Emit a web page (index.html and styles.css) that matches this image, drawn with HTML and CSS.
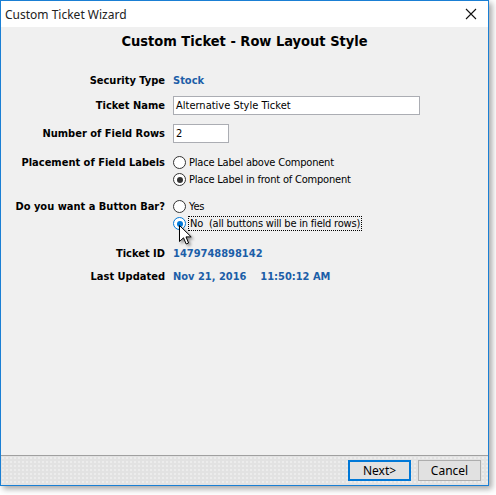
FILE: index.html
```html
<!DOCTYPE html>
<html>
<head>
<meta charset="utf-8">
<link rel="stylesheet" href="styles.css">
</head>
<body>
<div class="window">
  <div class="titlebar">
    <span class="title">Custom Ticket Wizard</span>
    <svg class="close" width="12" height="12" viewBox="0 0 12 12"><path d="M1 1 L11 11 M11 1 L1 11" stroke="#111" stroke-width="1.1" fill="none"/></svg>
  </div>
  <div class="content">
    <div class="heading">Custom Ticket - Row Layout Style</div>
    <div class="row r1"><div class="label">Security Type</div><div class="value">Stock</div></div>
    <div class="row r2"><div class="label">Ticket Name</div><div class="input wide">Alternative Style Ticket</div></div>
    <div class="row r3"><div class="label">Number of Field Rows</div><div class="input narrow">2</div></div>
    <div class="row r4"><div class="label lab-top">Placement of Field Labels</div>
      <div class="radios">
        <div class="radio"><span class="circle"></span><span class="rtext">Place Label above Component</span></div>
        <div class="radio rb"><span class="circle on"></span><span class="rtext">Place Label in front of Component</span></div>
      </div>
    </div>
    <div class="row r5"><div class="label lab-top">Do you want a Button Bar?</div>
      <div class="radios">
        <div class="radio"><span class="circle"></span><span class="rtext">Yes</span></div>
        <div class="radio"><span class="circle on hover"></span><span class="rtext focus">No&nbsp; (all buttons will be in field rows)</span></div>
      </div>
    </div>
    <div class="row r6"><div class="label">Ticket ID</div><div class="value">1479748898142</div></div>
    <div class="row r7"><div class="label">Last Updated</div><div class="value">Nov 21, 2016&nbsp;&nbsp;&nbsp;&nbsp;11:50:12 AM</div></div>
  </div>
  <div class="footer">
    <div class="btn primary">Next&gt;</div>
    <div class="btn">Cancel</div>
  </div>
  <svg class="cursor" width="14" height="22" viewBox="0 0 14 22"><path d="M0.5 0.5 L0.5 16.5 L4.5 12.8 L7.2 19 L9.6 18 L7 11.9 L12.2 11.9 Z" fill="#fff" stroke="#000" stroke-width="1" stroke-linejoin="miter"/></svg>
</div>
</body>
</html>
```
FILE: styles.css
```css
html, body { margin: 0; padding: 0; background: #fff; }
body { width: 496px; height: 495px; position: relative; font-family: "DejaVu Sans Condensed", "DejaVu Sans", sans-serif; font-size: 11px; color: #000; }
.window {
  position: relative;
  width: 487px; height: 484px;
  border: 1px solid #1a7fd4;
  background: #f0f0f0;
  display: flex; flex-direction: column;
  box-shadow: 3px 3px 6px rgba(0,0,0,0.35);
}
.titlebar {
  height: 26px; background: #fff;
  display: flex; align-items: center; justify-content: space-between;
  padding: 0 11px 0 4px;
}
.title { font-family: "Noto Sans", sans-serif; font-size: 12px; color: #222; }
.content { flex: 1; display: flex; flex-direction: column; }
.heading { height: 28px; display: flex; align-items: center; justify-content: center; font-weight: bold; font-size: 14.5px; }
.row { display: flex; align-items: center; white-space: nowrap; }
.label { width: 164px; text-align: right; font-weight: bold; flex: none; margin-right: 8px; }
.lab-top { align-self: flex-start; line-height: 17px; }
.value { color: #1c5ea8; font-weight: bold; }
.r1 { margin-top: 15px; height: 20px; }
.r2 { margin-top: 6px; height: 19px; }
.r3 { margin-top: 9px; height: 19px; }
.r4 { margin-top: 11px; align-items: flex-start; }
.r5 { margin-top: 10px; align-items: flex-start; }
.r6 { margin-top: 11px; height: 20px; }
.r7 { margin-top: 3px; height: 20px; }
.input { height: 17px; border: 1px solid #abadb3; background: #fff; box-sizing: content-box; line-height: 17px; padding-left: 2px; }
.wide { width: 243px; }
.narrow { width: 52px; }
.radios { display: flex; flex-direction: column; }
.radio { height: 17px; display: flex; align-items: center; }
.rtext { letter-spacing: -0.2px; }
.circle { width: 11px; height: 11px; border: 1px solid #333; border-radius: 50%; background: #fff; position: relative; margin-right: 3px; flex: none; }
.circle.on::after { content: ""; position: absolute; left: 2.5px; top: 2.5px; width: 6px; height: 6px; border-radius: 50%; background: #333; }
.circle.hover { border-color: #0078d7; }
.circle.hover::after { background: #0078d7; }
.focus { outline: 1px dotted #000; outline-offset: 0; padding: 0 1px; line-height: 13px; }
.footer {
  height: 29px; border-top: 1px solid #a0a0a0;
  background-color: #e2e2e2;
  background-image: radial-gradient(circle, #ececec 0.8px, transparent 1.2px);
  background-size: 4px 4px;
  display: flex; justify-content: flex-end; align-items: center; gap: 7px;
  padding-right: 7px;
}
.btn { width: 61px; height: 19px; border: 1px solid #adadad; background: #e1e1e1; display: flex; align-items: center; justify-content: center; font-family: "Noto Sans", sans-serif; font-size: 12px; color: #000; box-sizing: content-box; }
.btn.primary { border-color: #0078d7; box-shadow: inset 0 0 0 1px #0078d7; }
.cursor { position: absolute; left: 178px; top: 224px; filter: drop-shadow(2px 2px 1.5px rgba(0,0,0,0.4)); }
```
